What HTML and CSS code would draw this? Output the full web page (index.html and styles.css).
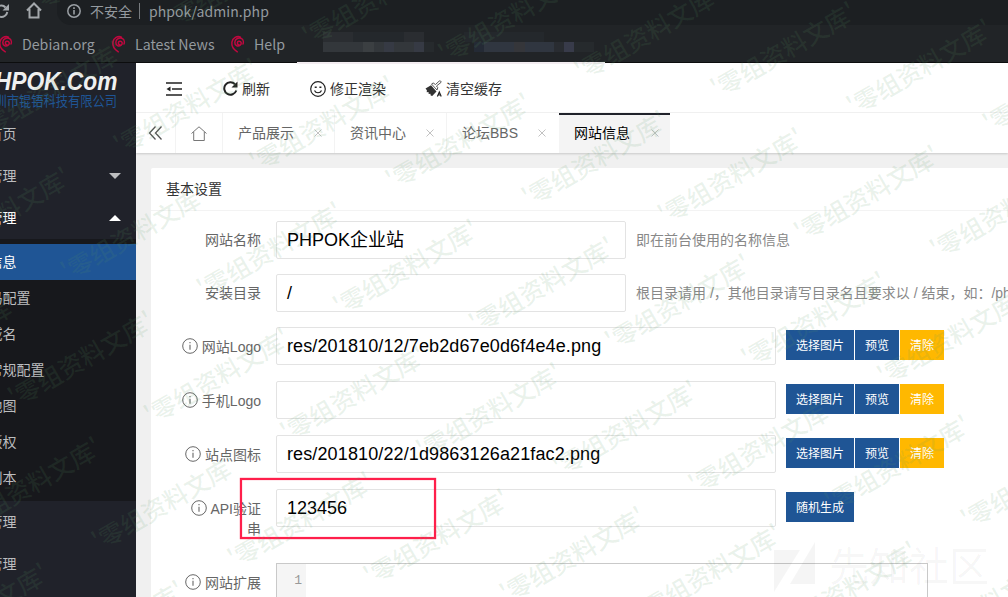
FILE: index.html
```html
<!DOCTYPE html>
<html lang="zh-CN">
<head>
<meta charset="utf-8">
<title>PHPOK.Com</title>
<link rel="stylesheet" href="styles.css">
</head>
<body>
<svg class="defs" width="0" height="0">
  <symbol id="info" viewBox="0 0 16 16"><circle cx="8" cy="8" r="7.300" fill="none" stroke="currentColor"/><path d="M8 6.800v5M8 4v1.300" stroke="currentColor" stroke-width="1.100"/></symbol>
  <symbol id="swirl" viewBox="0 0 16 18"><path d="M8.800 9.800C7 9.300 6.800 6.600 8.800 6.200c2.400-.4 3.300 2.600 1.400 4C7.800 12 4.600 10.300 4.800 7.300 5 3.800 9 2 11.600 3.600 13.600 4.900 13.600 7.600 13 9M10.500 2.100C7 .5 2.500 3 1.900 7.200 1.400 11 3.800 14.800 7.300 16.800" fill="none" stroke="#c0083f" stroke-width="1.500" stroke-linecap="round"/></symbol>
  <symbol id="close" viewBox="0 0 8 8"><path d="M.5.5l7 7M7.500.5l-7 7" fill="none" stroke="#c2c2c2"/></symbol>
</svg>

<header class="browser">
  <div class="address-row">
    <svg class="reload" width="10" height="18" viewBox="0 0 10 18"><path d="M0 4.800A5.500 5.500 0 0 1 5.500 6.500M7.300 11A6 6 0 0 1 0 15.800" fill="none" stroke="#a4a8ac" stroke-width="2"/><path d="M9 3v6.500H2.500z" fill="#a4a8ac"/></svg>
    <svg class="home" width="16" height="17" viewBox="0 0 16 17"><path d="M1 8.500L8 1.500l7 7M3.500 7v8.500h9V7" fill="none" stroke="#a4a8ac" stroke-width="2"/></svg>
    <div class="omnibox">
      <svg width="14" height="14" viewBox="0 0 14 14"><circle cx="7" cy="7" r="6.200" fill="none" stroke="#9a9fa4" stroke-width="1.500"/><path d="M7 6v4.500M7 3.300V5" stroke="#9a9fa4" stroke-width="1.600"/></svg>
      <span class="unsafe">不安全</span><i class="divider"></i><span class="url">phpok/admin.php</span>
    </div>
  </div>
  <div class="bookmarks">
    <svg><use href="#swirl"/></svg><span class="bm bm-a">Debian.org</span>
    <svg><use href="#swirl"/></svg><span class="bm bm-b">Latest News</span>
    <svg><use href="#swirl"/></svg><span class="bm bm-c">Help</span>
    <svg class="mosaic" viewBox="0 0 308 30">
      <path fill="#2a2d31" d="M26 0h30v20H26zM107 0h20v10h-20z"/><path fill="#24282c" d="M56 0h51v10H56zM167 0h80v10h-80z"/>
      <path fill="#33373b" d="M26 10h101v10H26z"/><path fill="#3b3f42" d="M66 10h11v10H66z"/><path fill="#363a44" d="M87 10h10v10H87zM117 10h10v10h-10z"/>
      <path fill="#262a2d" d="M127 10h10v10h-10zM277 10h20v10h-20z"/><path fill="#242a35" d="M177 10h10v10h-10z"/><path fill="#303640" d="M187 10h70v10h-70z"/><path fill="#35363a" d="M217 10h11v10h-11z"/><path fill="#292c31" d="M257 10h10v10h-10z"/><path fill="#383b4a" d="M267 10h10v10h-10z"/>
    </svg>
  </div>
</header>

<div class="app">
  <aside class="sidebar">
    <div class="brand"><div class="brand-name">PHPOK.Com</div><div class="company">深圳市锟铻科技有限公司</div></div>
    <nav>
      <a class="item">首页</a>
      <a class="item">管理<i class="caret down"></i></a>
      <a class="item open">管理<i class="caret up"></i></a>
      <div class="sub">
        <a class="active">信息</a><a>码配置</a><a>域名</a><a>常规配置</a><a>地图</a><a>版权</a><a>副本</a>
      </div>
      <a class="item">管理</a>
      <a class="item">管理</a>
    </nav>
  </aside>

  <main class="main">
    <div class="toolbar">
      <svg class="fold" width="16" height="14" viewBox="0 0 16 14"><path d="M0 1h16M6 7h10M0 13h16" stroke="#222" stroke-width="1.700"/><path d="M.5 7l4-2.500v5z" fill="#222"/></svg>
      <a class="t-refresh"><svg width="15" height="15" viewBox="0 0 15 15"><path d="M13.300 9.500A6.200 6.200 0 1 1 12 3.200" fill="none" stroke="#222" stroke-width="2"/><path d="M14.500.5v6h-6z" fill="#222"/></svg>刷新</a>
      <a class="t-render"><svg width="16" height="16" viewBox="0 0 16 16"><circle cx="8" cy="8" r="7.300" fill="none" stroke="#222" stroke-width="1.200"/><path d="M4.500 9.500c1.300 3 5.700 3 7 0" fill="none" stroke="#222" stroke-width="1.200"/><path d="M4.700 5.500h2v1.600h-2zM9.400 5.500h2v1.600h-2z" fill="#222"/></svg>修正渲染</a>
      <a class="t-clear"><svg width="18" height="17" viewBox="0 0 18 17"><path d="M.5 8.500L6 5.200l5.500 6.300L7.200 16l-1.500-.5-.3-1.800-1.700.2-.2-1.900-1.800.2.200-1.900z" fill="#333"/><path d="M6.500 4l5.500 6 .8-2.300-1.300-1.700L16 2.400c.3-1.300-.8-2-1.800-1.300L10.500 4.500 8.200 3z" fill="none" stroke="#444" stroke-width=".9"/><path d="M12.400 16.500l1.900-4.500 1.900 4.500M13.200 15h2.200" fill="none" stroke="#222" stroke-width="1.200"/></svg>清空缓存</a>
    </div>
    <div class="tabs">
      <a class="tab-nav back"><svg width="15" height="14" viewBox="0 0 15 14"><path d="M7.500.5L1.500 7l6 6.500M13.500.5L7.500 7l6 6.500" fill="none" stroke="#555" stroke-width="1.300"/></svg></a>
      <a class="tab-nav home-tab"><svg width="16" height="15" viewBox="0 0 16 15"><path d="M.5 7.500L8 .8l7.500 6.700M2.700 6v8.500h10.600V6" fill="none" stroke="#777"/></svg></a>
      <a class="tab">产品展示<svg><use href="#close"/></svg></a>
      <a class="tab">资讯中心<svg><use href="#close"/></svg></a>
      <a class="tab no-line">论坛BBS<svg><use href="#close"/></svg></a>
      <a class="tab current">网站信息<svg><use href="#close"/></svg></a>
    </div>
    <section class="card">
      <h2>基本设置</h2>
      <form class="form">
        <div class="row r53"><label>网站名称</label><div class="input short">PHPOK企业站</div><span class="hint">即在前台使用的名称信息</span></div>
        <div class="row r53"><label>安装目录</label><div class="input short">/</div><span class="hint">根目录请用 /，其他目录请写目录名且要求以 / 结束，如：/phpok/</span></div>
        <div class="row"><label><svg><use href="#info"/></svg> 网站Logo</label><div class="input path">res/201810/12/7eb2d67e0d6f4e4e.png</div><div class="buttons"><b>选择图片</b><b>预览</b><b class="warm">清除</b></div></div>
        <div class="row"><label><svg><use href="#info"/></svg> 手机Logo</label><div class="input"></div><div class="buttons"><b>选择图片</b><b>预览</b><b class="warm">清除</b></div></div>
        <div class="row"><label><svg><use href="#info"/></svg> 站点图标</label><div class="input path">res/201810/22/1d9863126a21fac2.png</div><div class="buttons"><b>选择图片</b><b>预览</b><b class="warm">清除</b></div></div>
        <div class="row tall"><label><svg><use href="#info"/></svg> API验证<br>串</label><div class="input">123456</div><div class="buttons"><b>随机生成</b></div></div>
        <div class="row"><label><svg><use href="#info"/></svg> 网站扩展</label><div class="editor"><span>1</span></div></div>
      </form>
    </section>
  </main>
</div>

<div class="highlight"></div>
<div class="community"><svg width="42" height="50" viewBox="0 0 42 50"><path d="M0 8h26L0 50zM41 0v42H16z" fill="currentColor"/></svg><span>先知社区</span></div>
<svg class="watermark" width="1008" height="597"></svg>
<script src="watermark.js"></script>
</body>
</html>
```
FILE: styles.css
```css
* { box-sizing: border-box; }
body {
  margin: 0;
  width: 1008px;
  height: 597px;
  overflow: hidden;
  position: relative;
  font: 14px/20px "Liberation Sans", "Noto Sans CJK SC", sans-serif;
  background: #f0f0f0;
  color: #333;
}
svg { flex: none; display: block; }
.defs { position: absolute; }

/* browser chrome */
.browser {
  height: 63px;
  background: #212427;
  border-bottom: 1px solid #0c0d0e;
  font-family: "Noto Sans CJK SC", sans-serif;
  color: #949a9f;
}
.address-row { display: flex; height: 25px; }
.reload { margin-top: 1px; }
.home { margin: 2px 0 0 16px; }
.omnibox {
  display: flex;
  align-items: center;
  flex: 1;
  margin-left: 15px;
  padding: 0 0 4px 10px;
  border-bottom-left-radius: 14px;
  background: #1c1f22;
}
.unsafe { margin-left: 9px; width: 42px; font-size: 14px; white-space: nowrap; }
.divider { width: 1px; height: 16px; margin: 0 9px 0 7px; background: #777b7f; }
.url { font-size: 14px; letter-spacing: .07px; }
.bookmarks { display: flex; align-items: center; height: 37px; font-size: 14.200px; }
.bookmarks > svg:not(.mosaic) { width: 16px; height: 18px; margin-left: -2px; }
.bm { white-space: nowrap; margin-left: 8px; }
.bm-a { width: 91px; }
.bm-b { width: 97px; }
.bm-c { width: 43px; }
.mosaic { position: absolute; left: 297px; top: 32px; width: 308px; height: 30px; }
.browser::after { content: ""; position: absolute; left: 297px; top: 62px; width: 308px; height: 2px; background: #f3edf1; }

.app { display: flex; height: 534px; }

/* sidebar */
.sidebar { width: 136px; flex: none; overflow: hidden; background: #20222a; color: #bcbdbf; }
.brand { height: 50px; width: 117px; display: flex; flex-direction: column; align-items: flex-end; }
.brand-name { font: italic bold 25px/37px "Liberation Sans", sans-serif; color: #f0f0f0; white-space: nowrap; transform: scaleX(.91); transform-origin: right; }
.company { margin-top: -9px; color: #1f5595; line-height: 20px; white-space: nowrap; transform: scaleX(.875); transform-origin: right; }
.item { display: flex; align-items: center; height: 42px; margin-left: -11.500px; }
.item.open { color: #fff; }
.caret { margin-left: auto; margin-right: 15px; border: 6px solid transparent; }
.down { border-top-color: #bcbdbf; border-bottom: 0; }
.up { border-bottom-color: #fff; border-top: 0; }
.sub { background: #17181c; padding: 5px 0; }
.sub a { display: block; height: 36px; line-height: 36px; text-indent: -11.500px; }
.sub .active { background: #1f5595; color: #fff; }

/* toolbar and tabs */
.main { flex: 1; min-width: 0; }
.toolbar { display: flex; align-items: center; height: 50px; padding: 2px 0 0 30px; background: #fff; border-bottom: 1px solid #f3f3f3; }
.toolbar a { display: flex; align-items: center; }
.t-refresh { margin-left: 41px; gap: 4px; }
.t-render { margin-left: 40px; gap: 4px; }
.t-clear { margin-left: 39px; gap: 3px; }
.tabs { display: flex; height: 40px; background: #fff; box-shadow: 0 1px 2px rgba(0,0,0,.16); position: relative; }
.tab-nav { display: flex; align-items: center; justify-content: center; border-right: 1px solid #f3f3f3; }
.back { width: 40px; }
.home-tab { width: 47px; }
.tab { display: flex; align-items: center; justify-content: space-between; width: 112px; padding: 0 12px 0 15px; border-right: 1px solid #f3f3f3; color: #666; }
.tab svg { width: 8px; height: 8px; }
.no-line { border-color: transparent; }
.current { width: 111px; padding: 0 11px 2px 15px; background: #f4f4f4; border-top: 2px solid #20222a; border-right: 0; color: #000; }

/* form card */
.card { margin: 15px 0 0 15px; height: 429px; overflow: hidden; background: #fff; border-top-left-radius: 2px; }
.card h2 { margin: 0; padding-left: 15px; font-size: 14px; font-weight: 400; line-height: 42px; border-bottom: 1px solid #f3f3f3; }
.form { padding-top: 10px; }
.row { display: flex; align-items: flex-start; height: 54px; white-space: nowrap; }
.r53 { height: 53px; }
.tall { height: 74px; }
.row label { width: 125px; flex: none; padding: 10px 15px 0 0; text-align: right; color: #666; }
.r53 label { padding-top: 9px; }
.row label svg { display: inline-block; width: 16px; height: 16px; vertical-align: -2px; }
.input { width: 500px; height: 38px; flex: none; padding-left: 10px; border: 1px solid #e3e3e3; border-radius: 2px; color: #000; font-size: 18px; line-height: 36px; }
.short { width: 350px; }
.path { letter-spacing: .12px; }
.hint { margin: 9px 0 0 10px; color: #888; }
.buttons { display: flex; gap: 1px; margin: 3px 0 0 10px; }
.buttons b { height: 30px; padding: 1px 10px 0; font-size: 12px; line-height: 30px; font-weight: 400; color: #fff; background: #1f5595; }
.buttons .warm { background: #ffb800; }
.editor { width: 652px; height: 60px; border: 1px solid #c9c9c9; }
.editor span { display: block; width: 29px; height: 58px; padding: 7px 4px 0; text-align: right; background: #f5f5f5; color: #999; font: 13px/20px "Liberation Mono", monospace; }

/* overlays */
.highlight { position: absolute; left: 240px; top: 478px; width: 196px; height: 61px; border: 2px solid #ff1f4b; box-shadow: 0 0 1px #ff1f4b, inset 0 0 1px #ff1f4b; }
.community { position: absolute; left: 774px; top: 542px; display: flex; gap: 13px; color: rgba(0,0,0,.04); font-size: 40px; line-height: 50px; }
.watermark { position: absolute; left: 0; top: 0; pointer-events: none; }
.watermark text { font: 500 24.600px "Noto Sans CJK SC", sans-serif; fill: rgba(90,155,100,.13); text-anchor: middle; }
```
FILE: watermark.js
```js
const layer = document.querySelector('.watermark');
for (let row = -2; row <= 6; row++) {
  for (let col = -8; col <= 6; col++) {
    const x = 784 + col * 136.1 - row * 52.7;
    const y = 51 + col * 17.4 + row * 126.2;
    if (x < -90 || x > 1100 || y < -60 || y > 660) continue;
    const label = document.createElementNS('http://www.w3.org/2000/svg', 'text');
    label.setAttribute('transform', `translate(${x} ${y}) rotate(-30)`);
    label.setAttribute('y', 9);
    label.textContent = "'零组资料文库'";
    layer.appendChild(label);
  }
}
```
